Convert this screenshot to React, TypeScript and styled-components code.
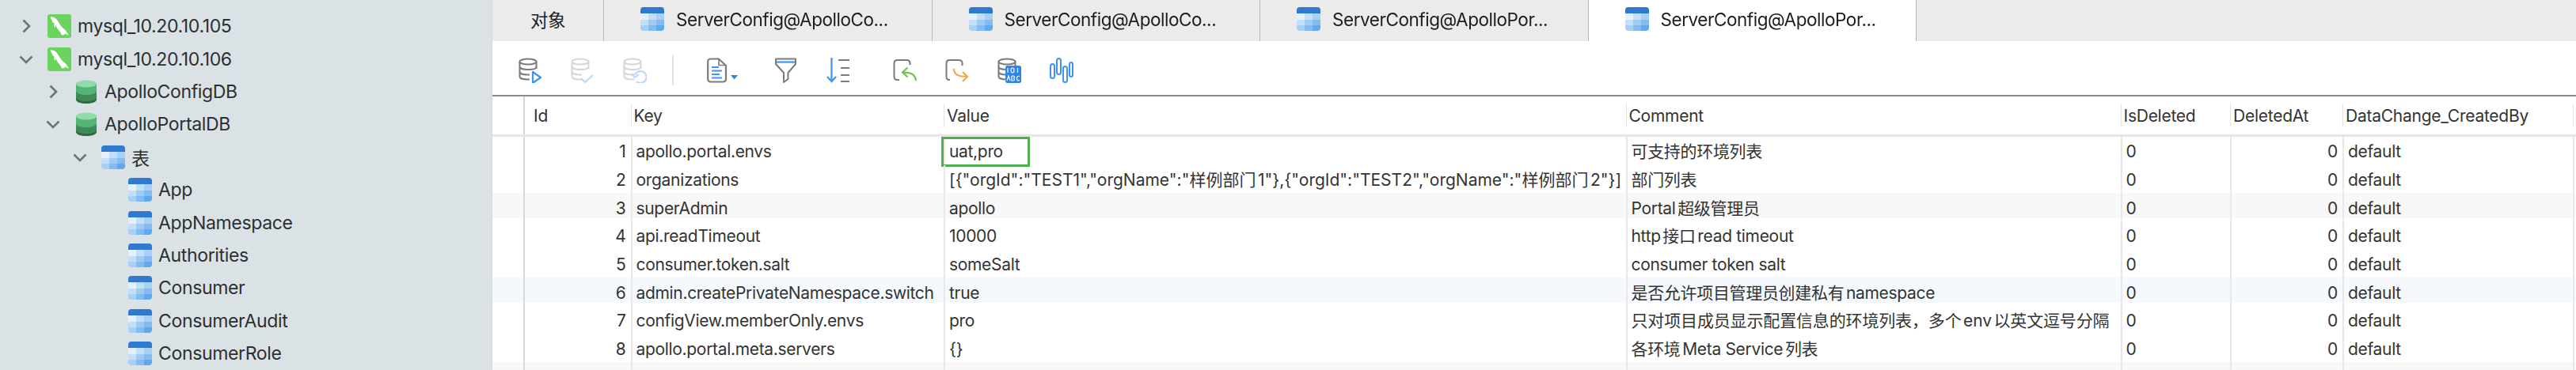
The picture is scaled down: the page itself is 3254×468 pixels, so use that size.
import React from "react";
import styled, { createGlobalStyle } from "styled-components";

const FONT = `Inter, "Noto Sans CJK SC", "Liberation Sans", sans-serif`;
const COLUMNS = "39px 135.5px 395.5px 861.5px 625px 138.5px 142px 290.5px 1fr";

const Global = createGlobalStyle`
  html, body { margin: 0; padding: 0; background: #fff; overflow: hidden; }
  * { box-sizing: border-box; }
`;

const Page = styled.div`
  width: 3254px;
  height: 468px;
  display: grid;
  grid-template-columns: 622px 1fr;
  overflow: hidden;
  font-family: ${FONT};
  text-autospace: normal;
  filter: blur(0.55px);
`;

const Sidebar = styled.aside`
  background: #dbe2e6;
  padding-top: 12.6px;
  border-right: 1px solid #d2d8dc;
  overflow: hidden;
`;

const TreeRow = styled.div<{ $depth: number }>`
  height: 41.4px;
  display: flex;
  align-items: center;
  padding-left: ${(p) => 22 + p.$depth * 34}px;
`;

const TreeToggle = styled.span`
  width: 22px;
  height: 22px;
  margin-right: 16px;
  display: flex;
  align-items: center;
  justify-content: center;
  flex: none;
`;

const TreeLabel = styled.span`
  margin-left: 8px;
  font-size: 23px;
  letter-spacing: -0.35px;
  color: #2c2f31;
  white-space: nowrap;
`;

const Main = styled.main`
  display: flex;
  flex-direction: column;
  min-width: 0;
`;

const TabStrip = styled.div`
  height: 52px;
  display: flex;
  flex: none;
  background: #ebebeb;
`;

const Tab = styled.div<{ $active?: boolean; $width: number; $center?: boolean }>`
  width: ${(p) => p.$width}px;
  flex: none;
  display: flex;
  align-items: center;
  justify-content: ${(p) => (p.$center ? "center" : "flex-start")};
  gap: 15px;
  padding: 0 0 4px ${(p) => (p.$center ? 0 : 46)}px;
  background: ${(p) => (p.$active ? "#fff" : "transparent")};
  border-right: 1.5px solid #b9b9b9;
  font-size: 22.5px;
  letter-spacing: -0.45px;
  color: #1d1d1d;
  white-space: nowrap;
`;

const Toolbar = styled.div`
  height: 70px;
  flex: none;
  display: flex;
  align-items: center;
  padding: 5px 0 0 33px;
  background: #fff;
  border-bottom: 2px solid #8a8a8a;
`;

const ToolGroup = styled.div<{ $lead?: number }>`
  display: flex;
  align-items: center;
  gap: 36px;
  margin-left: ${(p) => p.$lead ?? 0}px;
`;

const ToolDivider = styled.div`
  width: 2px;
  height: 38px;
  margin-left: 32px;
  background: #e2e2e2;
`;

const ToolIcon = styled.svg<{ $wide?: boolean }>`
  width: ${(p) => (p.$wide ? 49 : 30)}px;
  height: 32px;
  flex: none;
  display: block;
`;

const HeaderRow = styled.div`
  height: 51px;
  flex: none;
  display: grid;
  grid-template-columns: ${COLUMNS};
  align-items: center;
  border-bottom: 3px solid #e6e6e6;
  background: #fff;
`;

const HeaderCell = styled.div<{ $first?: boolean }>`
  height: ${(p) => (p.$first ? "100%" : "30px")};
  border-left: ${(p) => (p.$first ? "2px solid #d4d4d4" : "1.5px solid #e3e3e3")};
  padding-left: ${(p) => (p.$first ? 11 : 3)}px;
  display: flex;
  align-items: center;
  font-size: 21px;
  letter-spacing: -0.25px;
  color: #333;
  white-space: nowrap;
`;

const HeaderBlank = styled.div``;

const Body = styled.div`
  flex: 1;
  min-height: 0;
  overflow: hidden;
`;

const TONES: Record<string, string> = { white: "#ffffff", gray: "#f8f8f8", blue: "#f5f9fd" };

const Row = styled.div<{ $tone: string }>`
  height: 35.67px;
  display: grid;
  grid-template-columns: ${COLUMNS};
  background: linear-gradient(${(p) => TONES[p.$tone]} 32px, #fff 32px);
`;

const Cell = styled.div<{ $first?: boolean; $right?: boolean; $spacing?: number }>`
  position: relative;
  border-left: ${(p) => (p.$first ? "2px solid #d9d9d9" : "2px solid #e8e8e8")};
  padding: 3px ${(p) => (p.$right ? 6 : 0)}px 0 ${(p) => (p.$right ? 0 : 5)}px;
  display: flex;
  align-items: center;
  justify-content: ${(p) => (p.$right ? "flex-end" : "flex-start")};
  font-size: 21px;
  letter-spacing: ${(p) => p.$spacing ?? -0.32}px;
  line-height: 32px;
  color: #333;
  white-space: nowrap;
`;

const Blank = styled.div``;

const Selection = styled.span`
  position: absolute;
  left: -5px;
  top: 0;
  width: 112px;
  height: 38px;
  border: 3px solid #4caf50;
  pointer-events: none;
`;

const Chevron = ({ open }: { open?: boolean }) => (
  <svg width="22" height="22" viewBox="0 0 22 22" fill="none" stroke="#6d7376" strokeWidth="2.6">
    {open ? <path d="M3.5 7.5 L11 15 L18.5 7.5" /> : <path d="M7.5 3.5 L15 11 L7.5 18.5" />}
  </svg>
);

const MysqlIcon = () => (
  <svg width="30" height="30" viewBox="0 0 30 30">
    <rect width="30" height="30" rx="3" fill="#6cd35f" />
    <path
      d="M3.5 3.5 C6 2.5 9.5 4 12 7 C14.5 10 15.5 14 19 17 C22 19.5 25 22 26.5 27 L22.5 24.5 C21 26.5 19.5 26.8 17.5 26 C17.5 24 15.5 22 14 20 C11 16.5 10 12.5 8.5 11.5 L6.5 10.5 L6 8 L4.5 6 Z"
      fill="#fff"
    />
    <path d="M9 11 C8 13 8 15 9.5 17 C10 15 10.5 13.5 10 11.5 Z" fill="#fff" />
  </svg>
);

const DbIcon = () => (
  <svg width="30" height="30" viewBox="0 0 30 30">
    <path d="M2 22 V25 C2 28 8 30 15 30 C22 30 28 28 28 25 V22 Z" fill="#2f6b42" />
    <path d="M2 14 V22 C2 25 8 27 15 27 C22 27 28 25 28 22 V14 Z" fill="#3f8a57" />
    <path d="M2 5 V14 C2 17 8 19 15 19 C22 19 28 17 28 14 V5 Z" fill="#54b375" />
    <ellipse cx="15" cy="5" rx="13" ry="4.6" fill="#90dbaa" />
  </svg>
);

const TableIcon = () => (
  <svg width="30" height="30" viewBox="0 0 30 30">
    <defs>
      <clipPath id="tblclip">
        <rect width="30" height="30" rx="4" />
      </clipPath>
    </defs>
    <g clipPath="url(#tblclip)">
      <rect width="30" height="8" fill="#2f7ad0" />
      <rect y="8" width="10" height="8" fill="#e4f1fc" />
      <rect x="10" y="8" width="10" height="8" fill="#c2dff8" />
      <rect x="20" y="8" width="10" height="8" fill="#a6d0f5" />
      <rect y="16" width="10" height="7" fill="#c3dff8" />
      <rect x="10" y="16" width="10" height="7" fill="#9fcbf3" />
      <rect x="20" y="16" width="10" height="7" fill="#84bcf0" />
      <rect y="23" width="10" height="7" fill="#a6d0f5" />
      <rect x="10" y="23" width="10" height="7" fill="#84bcf0" />
      <rect x="20" y="23" width="10" height="7" fill="#62a8ec" />
    </g>
  </svg>
);

const Cylinder = ({ color }: { color: string }) => (
  <g fill="none" stroke={color} strokeWidth="2">
    <ellipse cx="12" cy="5" rx="10.5" ry="3.6" />
    <path d="M1.5 5 V24 C1.5 26 6 27.5 12 27.5 H14" />
    <path d="M22.5 5 V14" />
    <path d="M1.5 11.5 C1.5 13.5 6 15 12 15 C17 15 22.5 14 22.5 11.5" />
    <path d="M1.5 18 C1.5 20 6 21.5 12 21.5 H14" />
  </g>
);

const BLUE = "#3f93f5";

const ToolRun = () => (
  <ToolIcon viewBox="0 0 30 32">
    <Cylinder color="#7b7b7b" />
    <path d="M18 18 L28 25 L18 32 Z" fill="none" stroke={BLUE} strokeWidth="2.2" strokeLinejoin="round" />
  </ToolIcon>
);

const ToolCheck = () => (
  <ToolIcon viewBox="0 0 30 32">
    <Cylinder color="#d6d6d6" />
    <path d="M13 26 L18 31 L28 22" fill="none" stroke="#bcdafb" strokeWidth="2.2" />
  </ToolIcon>
);

const ToolRevert = () => (
  <ToolIcon viewBox="0 0 30 32">
    <Cylinder color="#d6d6d6" />
    <path d="M15 22 A7.5 7.5 0 1 1 17 30" fill="none" stroke="#bcdafb" strokeWidth="2.2" />
    <path d="M11 20 L15 25 L20 21" fill="none" stroke="#bcdafb" strokeWidth="2.2" />
  </ToolIcon>
);

const ToolDoc = () => (
  <ToolIcon $wide viewBox="0 0 49 32">
    <path
      d="M5 1.5 H15 L24 10 V27 C24 29.5 22.5 30.5 20 30.5 H5 C2.5 30.5 1.2 29.5 1.2 27 V5 C1.2 2.5 2.5 1.5 5 1.5 Z"
      fill="none"
      stroke="#7b7b7b"
      strokeWidth="2.2"
    />
    <path d="M15 1.5 V9.5 H24" fill="none" stroke="#7b7b7b" strokeWidth="1.6" />
    <path d="M6 12 H15 M6 16.5 H19 M6 21 H16 M6 25.5 H19" stroke={BLUE} strokeWidth="2.2" />
    <path d="M30 22 H39 L34.5 27.5 Z" fill="#2f84e8" />
  </ToolIcon>
);

const ToolFilter = () => (
  <ToolIcon viewBox="0 0 30 32">
    <path
      d="M2 1.5 H27 V8 L17.5 19 V27 L12 31 V19 L2 8 Z"
      fill="none"
      stroke="#7b7b7b"
      strokeWidth="2"
      strokeLinejoin="round"
    />
    <path d="M3 5.5 H26" stroke={BLUE} strokeWidth="2.2" />
  </ToolIcon>
);

const ToolSort = () => (
  <ToolIcon viewBox="0 0 30 32">
    <path d="M6.5 0 V30 M1 24 L6.5 30 L12 24" fill="none" stroke={BLUE} strokeWidth="2.2" />
    <path d="M15 3 H29 M18 13 H29 M18 22 H29 M18 30 H29" stroke="#7b7b7b" strokeWidth="2" />
  </ToolIcon>
);

const ToolUndo = () => (
  <ToolIcon viewBox="0 0 30 32">
    <path
      d="M8 28 H5 C3 28 1.5 26.5 1.5 24 V7 C1.5 4.5 3 3 5.5 3 H17 C20 3 21.5 4.5 21.5 7 V9"
      fill="none"
      stroke="#7b7b7b"
      strokeWidth="2"
    />
    <path d="M29 29 C28 21 23 18.5 12 18.5 M18.5 12.5 L12 18.5 L18.5 24.5" fill="none" stroke="#6cc24a" strokeWidth="2.2" />
  </ToolIcon>
);

const ToolRedo = () => (
  <ToolIcon viewBox="0 0 30 32">
    <path
      d="M6 28 H5 C3 28 1.5 26.5 1.5 24 V7 C1.5 4.5 3 3 5.5 3 H17 C20 3 21.5 4.5 21.5 7 V10"
      fill="none"
      stroke="#7b7b7b"
      strokeWidth="2"
    />
    <path d="M11 14 C11 21 16 24 28 24 M22 18 L28 24 L22 30" fill="none" stroke="#f5a54a" strokeWidth="2.2" />
  </ToolIcon>
);

const ToolEncoding = () => (
  <ToolIcon viewBox="0 0 30 32">
    <Cylinder color="#7b7b7b" />
    <rect x="10" y="10" width="20" height="22" rx="2.5" fill="#2f84e8" />
    <path
      d="M13 13 V19 M19 13 C17.5 13 17 14.5 17 16 C17 17.5 17.5 19 19 19 C20.5 19 21 17.5 21 16 C21 14.5 20.5 13 19 13 Z M25.5 13 V19 M12 29 L14 23 L16 29 M18 23 V29 H20 C22 29 22 26 20 26 C22 26 22 23 20 23 H18 M28 23.5 C25 22.5 24.5 24.5 24.5 26 C24.5 28 25 29.5 28 28.5"
      fill="none"
      stroke="#fff"
      strokeWidth="1.2"
    />
  </ToolIcon>
);

const ToolWave = () => (
  <ToolIcon viewBox="0 0 30 32">
    <g fill="none" stroke={BLUE} strokeWidth="2">
      <rect x="1" y="8" width="5" height="18" rx="2.5" />
      <rect x="9" y="1" width="5" height="20" rx="2.5" />
      <rect x="17" y="11" width="5" height="20" rx="2.5" />
      <rect x="25" y="6" width="4" height="18" rx="2" />
    </g>
  </ToolIcon>
);

type Node = { label: string; depth: number; icon: "mysql" | "db" | "table"; toggle?: "open" | "closed" };

const TREE: Node[] = [
  { label: "mysql_10.20.10.105", depth: 0, icon: "mysql", toggle: "closed" },
  { label: "mysql_10.20.10.106", depth: 0, icon: "mysql", toggle: "open" },
  { label: "ApolloConfigDB", depth: 1, icon: "db", toggle: "closed" },
  { label: "ApolloPortalDB", depth: 1, icon: "db", toggle: "open" },
  { label: "表", depth: 2, icon: "table", toggle: "open" },
  { label: "App", depth: 3, icon: "table" },
  { label: "AppNamespace", depth: 3, icon: "table" },
  { label: "Authorities", depth: 3, icon: "table" },
  { label: "Consumer", depth: 3, icon: "table" },
  { label: "ConsumerAudit", depth: 3, icon: "table" },
  { label: "ConsumerRole", depth: 3, icon: "table" },
];

const ICONS = { mysql: MysqlIcon, db: DbIcon, table: TableIcon };

const TABS = [
  "ServerConfig@ApolloCo...",
  "ServerConfig@ApolloCo...",
  "ServerConfig@ApolloPor...",
  "ServerConfig@ApolloPor...",
];

const HEADERS = ["Id", "Key", "Value", "Comment", "IsDeleted", "DeletedAt", "DataChange_CreatedBy"];

const ROWS = [
  ["apollo.portal.envs", "uat,pro", "可支持的环境列表"],
  ["organizations", '[{"orgId":"TEST1","orgName":"样例部门1"},{"orgId":"TEST2","orgName":"样例部门2"}]', "部门列表"],
  ["superAdmin", "apollo", "Portal超级管理员"],
  ["api.readTimeout", "10000", "http接口read timeout"],
  ["consumer.token.salt", "someSalt", "consumer token salt"],
  ["admin.createPrivateNamespace.switch", "true", "是否允许项目管理员创建私有namespace"],
  ["configView.memberOnly.envs", "pro", "只对项目成员显示配置信息的环境列表，多个env以英文逗号分隔"],
  ["apollo.portal.meta.servers", "{}", "各环境Meta Service列表"],
];

const toneOf = (i: number) => (i === 5 ? "blue" : i % 3 === 2 ? "gray" : "white");

export default function App() {
  return (
    <Page>
      <Global />
      <Sidebar>
        {TREE.map((n) => {
          const Icon = ICONS[n.icon];
          return (
            <TreeRow key={n.label} $depth={n.depth}>
              <TreeToggle>{n.toggle && <Chevron open={n.toggle === "open"} />}</TreeToggle>
              <Icon />
              <TreeLabel>{n.label}</TreeLabel>
            </TreeRow>
          );
        })}
      </Sidebar>
      <Main>
        <TabStrip>
          <Tab $width={141} $center>
            对象
          </Tab>
          {TABS.map((t, i) => (
            <Tab key={i} $width={414.5} $active={i === 3}>
              <TableIcon />
              {t}
            </Tab>
          ))}
        </TabStrip>
        <Toolbar>
          <ToolGroup>
            <ToolRun />
            <ToolCheck />
            <ToolRevert />
          </ToolGroup>
          <ToolDivider />
          <ToolGroup $lead={42}>
            <ToolDoc />
            <ToolFilter />
            <ToolSort />
          </ToolGroup>
          <ToolGroup $lead={54}>
            <ToolUndo />
            <ToolRedo />
            <ToolEncoding />
            <ToolWave />
          </ToolGroup>
        </Toolbar>
        <HeaderRow>
          <HeaderBlank />
          {HEADERS.map((h, i) => (
            <HeaderCell key={h} $first={i === 0}>
              {h}
            </HeaderCell>
          ))}
          <HeaderCell />
        </HeaderRow>
        <Body>
          {ROWS.map((r, i) => (
            <Row key={i} $tone={toneOf(i)}>
              <Blank />
              <Cell $first $right>
                {i + 1}
              </Cell>
              <Cell>{r[0]}</Cell>
              <Cell $spacing={i === 1 ? 0 : undefined}>
                {r[1]}
                {i === 0 && <Selection />}
              </Cell>
              <Cell $spacing={i === 6 ? -0.15 : undefined}>{r[2]}</Cell>
              <Cell>0</Cell>
              <Cell $right>0</Cell>
              <Cell>default</Cell>
              <Cell />
            </Row>
          ))}
          <Row $tone="gray">
            <Blank />
            <Cell $first />
            <Cell />
            <Cell />
            <Cell />
            <Cell />
            <Cell />
            <Cell />
            <Cell />
          </Row>
        </Body>
      </Main>
    </Page>
  );
}
